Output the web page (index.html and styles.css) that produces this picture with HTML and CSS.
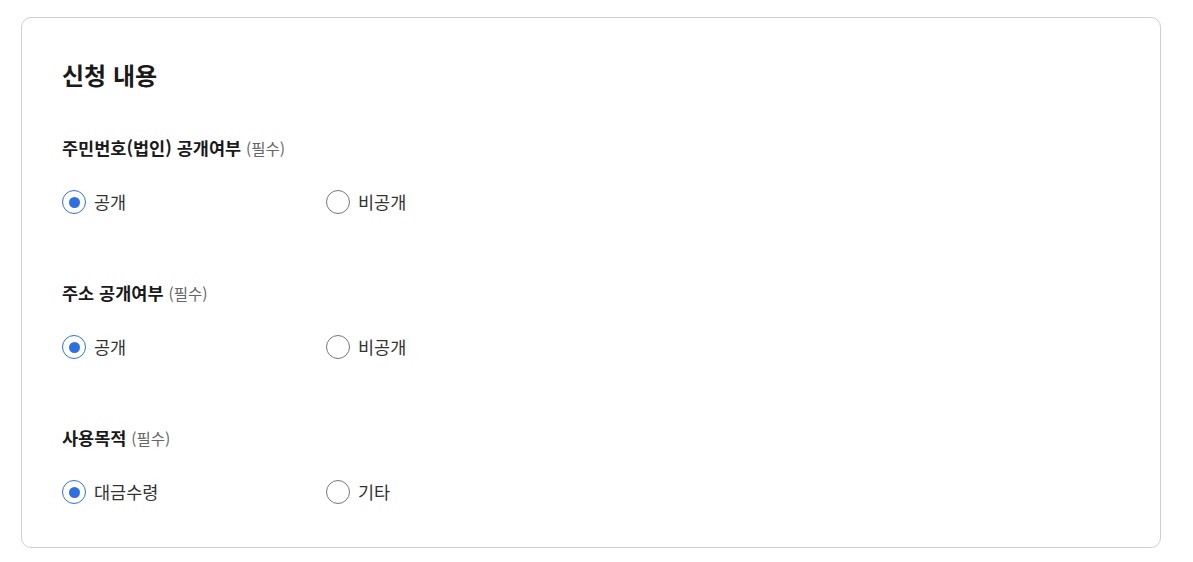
FILE: index.html
```html
<!DOCTYPE html>
<html lang="ko">
<head>
<meta charset="utf-8">
<title>신청 내용</title>
<link rel="stylesheet" href="styles.css">
</head>
<body>
<section class="card">
  <h2 class="title">신청 내용</h2>

  <div class="group">
    <div class="label">주민번호(법인) 공개여부 <span class="req">(필수)</span></div>
    <div class="options">
      <label class="opt"><span class="radio checked"></span><span>공개</span></label>
      <label class="opt"><span class="radio"></span><span>비공개</span></label>
    </div>
  </div>

  <div class="group">
    <div class="label">주소 공개여부 <span class="req">(필수)</span></div>
    <div class="options">
      <label class="opt"><span class="radio checked"></span><span>공개</span></label>
      <label class="opt"><span class="radio"></span><span>비공개</span></label>
    </div>
  </div>

  <div class="group">
    <div class="label">사용목적 <span class="req">(필수)</span></div>
    <div class="options">
      <label class="opt"><span class="radio checked"></span><span>대금수령</span></label>
      <label class="opt"><span class="radio"></span><span>기타</span></label>
    </div>
  </div>
</section>
</body>
</html>
```

FILE: styles.css
```css
* { box-sizing: border-box; }
html, body { background: #fff; }
body {
  margin: 0;
  padding: 17px 32px 0 21px;
  font-family: "Noto Sans CJK KR", "Noto Sans", sans-serif;
  color: #222;
}
.card {
  width: 1140px;
  height: 531px;
  border: 1px solid #cfcfcf;
  border-radius: 10px;
  padding: 41px 40px 0 40px;
}
.title {
  margin: 0 0 45px 0;
  font-size: 24px;
  line-height: 32px;
  font-weight: 700;
  color: #1a1a1a;
}
.group { margin-bottom: 67px; }
.group:last-child { margin-bottom: 0; }
.label {
  font-size: 17.5px;
  line-height: 24px;
  font-weight: 700;
  color: #1a1a1a;
  margin-bottom: 30px;
}
.req {
  font-size: 15.5px;
  font-weight: 400;
  color: #666;
}
.options {
  display: grid;
  grid-template-columns: 264px 264px;
}
.opt {
  display: flex;
  align-items: center;
  gap: 8px;
  font-size: 17.5px;
  line-height: 24px;
  color: #333;
}
.radio {
  width: 24px;
  height: 24px;
  border-radius: 50%;
  border: 1.5px solid #777;
  display: flex;
  align-items: center;
  justify-content: center;
  flex: none;
}
.radio.checked { border-color: #2f6fe4; }
.radio.checked::after {
  content: "";
  width: 11px;
  height: 11px;
  border-radius: 50%;
  background: #2f6fe4;
}
```
